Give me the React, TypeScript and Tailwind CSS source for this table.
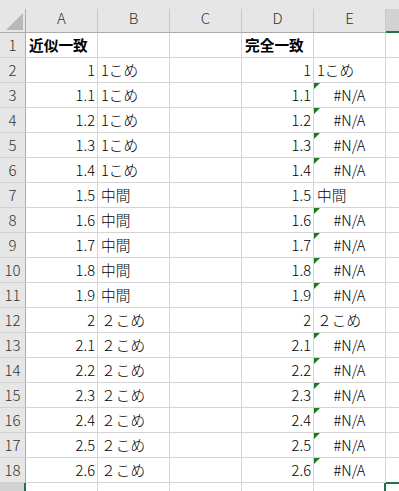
import React from "react";

const FONT = '"Noto Sans CJK JP", "Noto Sans", sans-serif';

type Row = { a?: string; b?: string; d?: string; e?: string; eErr?: boolean; bold?: boolean };

const vals = ["1", "1.1", "1.2", "1.3", "1.4", "1.5", "1.6", "1.7", "1.8", "1.9", "2", "2.1", "2.2", "2.3", "2.4", "2.5", "2.6"];

function labelFor(v: string) {
  const n = parseFloat(v);
  if (n < 1.5) return "1こめ";
  if (n < 2) return "中間";
  return "２こめ";
}

const rows: Row[] = [
  { a: "近似一致", d: "完全一致", bold: true },
  ...vals.map((v) => {
    const exact = v === "1" || v === "1.5" || v === "2";
    return {
      a: v,
      b: labelFor(v),
      d: v,
      e: exact ? labelFor(v) : "#N/A",
      eErr: !exact,
    } as Row;
  }),
];

function Cell({
  children,
  align = "left",
  bold = false,
  err = false,
}: {
  children?: React.ReactNode;
  align?: "left" | "right" | "center";
  bold?: boolean;
  err?: boolean;
}) {
  const j = align === "right" ? "justify-end pr-[2px]" : align === "center" ? "justify-center" : "justify-start pl-[3px]";
  return (
    <div
      className={`relative h-[25px] border-r border-b border-[#d4d4d4] bg-white flex items-center ${j} text-[14.7px] text-black whitespace-nowrap overflow-visible ${bold ? "font-bold" : "font-light"}`}
    >
      {err && (
        <svg className="absolute left-0 top-0" width="6" height="6" viewBox="0 0 6 6">
          <polygon points="0,0 6,0 0,6" fill="#1e7a1e" />
        </svg>
      )}
      <span className="leading-none">{children}</span>
    </div>
  );
}

export default function App() {
  const cols = ["A", "B", "C", "D", "E"];
  return (
    <div className="w-[399px] h-[491px] overflow-hidden bg-[#e6e6e6]" style={{ fontFamily: FONT }}>
      <div className="h-[9px] bg-[#e6e6e6]" />
      <div className="grid grid-cols-[26px_72px_72px_72px_72px_72px_1fr]">
        {/* header row */}
        <div className="relative h-[24px] border-r border-b border-[#ababab] bg-[#e6e6e6]">
          <svg className="absolute left-[6px] top-[4px]" width="17" height="17" viewBox="0 0 17 17">
            <polygon points="17,0 17,17 0,17" fill="#b8b8b8" />
          </svg>
        </div>
        {cols.map((c) => (
          <div
            key={c}
            className="h-[24px] border-r border-b border-[#c8c8c8] border-b-[#ababab] bg-[#e6e6e6] flex items-center justify-center pb-[4px] text-[15px] font-light text-[#333]"
          >
            {c}
          </div>
        ))}
        <div className="h-[24px] bg-[#d2d2d2] border-b-2 border-[#217346]" />

        {rows.map((r, i) => (
          <React.Fragment key={i}>
            <div className="h-[25px] border-r border-b border-r-[#ababab] border-b-[#d0d0d0] bg-[#e6e6e6] flex items-center justify-center text-[15px] font-light text-[#333]">
              {i + 1}
            </div>
            <Cell align={r.bold ? "left" : "right"} bold={r.bold}>
              {r.a}
            </Cell>
            <Cell>{r.b}</Cell>
            <Cell />
            <Cell align={r.bold ? "left" : "right"} bold={r.bold}>
              {r.d}
            </Cell>
            <Cell align={r.eErr ? "center" : "left"} err={r.eErr}>
              {r.e}
            </Cell>
            <div className="h-[25px] border-b border-[#d4d4d4] bg-white" />
          </React.Fragment>
        ))}

        {/* row 19 partial */}
        <div className="h-[25px] border-r-2 border-[#217346] bg-[#d2d2d2]" />
        <div className="h-[25px] border-r border-[#d4d4d4] bg-white" />
        <div className="h-[25px] border-r border-[#d4d4d4] bg-white" />
        <div className="h-[25px] border-r border-[#d4d4d4] bg-white" />
        <div className="h-[25px] border-r border-[#d4d4d4] bg-white" />
        <div className="h-[25px] border-r border-[#d4d4d4] bg-white" />
        <div className="h-[25px] bg-white border-t-2 border-l-2 border-[#217346] -ml-[2px] -mt-[1px]" />
      </div>
    </div>
  );
}
